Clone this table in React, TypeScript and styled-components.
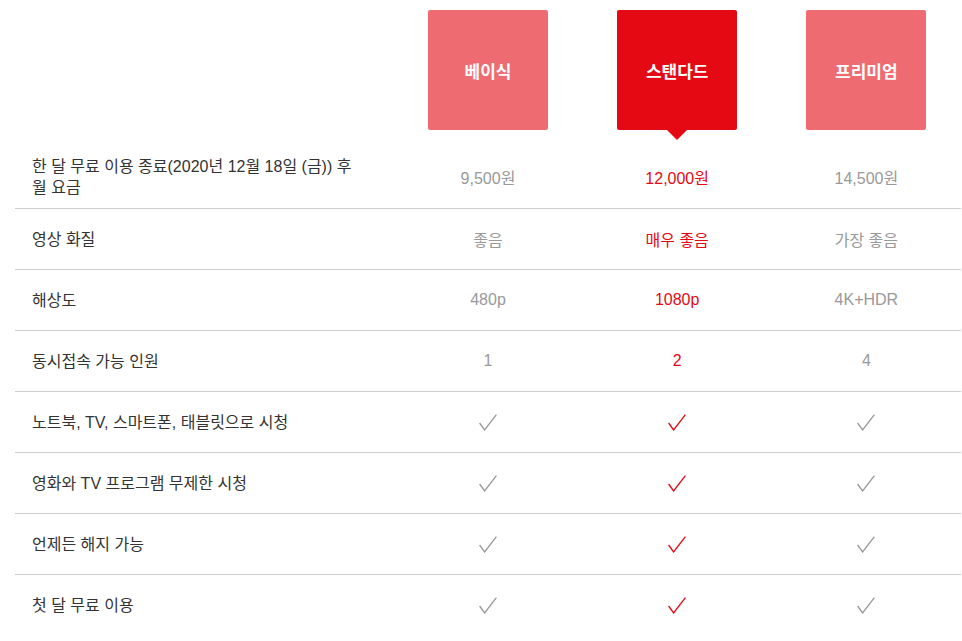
import React from "react";
import styled, { createGlobalStyle, css } from "styled-components";

const GlobalStyle = createGlobalStyle`
  body {
    margin: 0;
    background: #fff;
    font-family: "Liberation Sans", "Noto Sans CJK KR", Arial, sans-serif;
  }
`;

const RED = "#e50914";
const LIGHT_RED = "#ef6b72";
const GRAY = "#999";

type Plan = { name: string; active?: boolean };

const plans: Plan[] = [{ name: "베이식" }, { name: "스탠다드", active: true }, { name: "프리미엄" }];

type Row = { label: string; values: string[] | "check" };

const rows: Row[] = [
  { label: "한 달 무료 이용 종료(2020년 12월 18일 (금)) 후 월 요금", values: ["9,500원", "12,000원", "14,500원"] },
  { label: "영상 화질", values: ["좋음", "매우 좋음", "가장 좋음"] },
  { label: "해상도", values: ["480p", "1080p", "4K+HDR"] },
  { label: "동시접속 가능 인원", values: ["1", "2", "4"] },
  { label: "노트북, TV, 스마트폰, 태블릿으로 시청", values: "check" },
  { label: "영화와 TV 프로그램 무제한 시청", values: "check" },
  { label: "언제든 해지 가능", values: "check" },
  { label: "첫 달 무료 이용", values: "check" },
];

const Wrapper = styled.div`
  width: 946px;
  margin-left: 15px;
`;

const Grid = styled.div`
  display: grid;
  grid-template-columns: 40% 20% 20% 20%;
`;

const HeaderRow = styled(Grid)`
  padding: 10px 0 15px;
`;

const PlanCell = styled.div`
  display: flex;
  justify-content: center;
`;

const PlanBox = styled.div<{ $active?: boolean }>`
  position: relative;
  width: 120px;
  height: 120px;
  border-radius: 2px;
  background: ${(p) => (p.$active ? RED : LIGHT_RED)};
  color: #fff;
  font-size: 17px;
  font-weight: bold;
  display: flex;
  align-items: center;
  justify-content: center;
  ${(p) =>
    p.$active &&
    css`
      &::after {
        content: "";
        position: absolute;
        left: 50%;
        top: 100%;
        margin-left: -10px;
        border-left: 10px solid transparent;
        border-right: 10px solid transparent;
        border-top: 10px solid ${RED};
      }
    `}
`;

const TableRow = styled(Grid)<{ $first?: boolean; $last?: boolean }>`
  min-height: ${(p) => (p.$first ? 63 : 60)}px;
  border-bottom: ${(p) => (p.$last ? "none" : "1px solid #ccc")};
`;

const LabelCell = styled.div`
  display: flex;
  align-items: center;
  padding: 0 30px 0 17px;
  font-size: 16px;
  line-height: 21px;
  color: #333;
`;

const ValueCell = styled.div<{ $active?: boolean }>`
  display: flex;
  align-items: center;
  justify-content: center;
  font-size: 16px;
  color: ${(p) => (p.$active ? RED : GRAY)};
`;

const Check = ({ color }: { color: string }) => (
  <svg width="18" height="17" viewBox="0 0 18 17" fill="none">
    <path d="M0.6 9 L5.6 16 L17.4 0.6" stroke={color} strokeWidth="1.3" />
  </svg>
);

export default function App() {
  return (
    <Wrapper>
      <GlobalStyle />
      <HeaderRow>
        <div />
        {plans.map((p) => (
          <PlanCell key={p.name}>
            <PlanBox $active={p.active}>{p.name}</PlanBox>
          </PlanCell>
        ))}
      </HeaderRow>
      {rows.map((r, i) => (
        <TableRow key={r.label} $first={i === 0} $last={i === rows.length - 1}>
          <LabelCell>{r.label}</LabelCell>
          {plans.map((p, j) => (
            <ValueCell key={p.name} $active={p.active}>
              {r.values === "check" ? <Check color={p.active ? RED : GRAY} /> : r.values[j]}
            </ValueCell>
          ))}
        </TableRow>
      ))}
    </Wrapper>
  );
}
